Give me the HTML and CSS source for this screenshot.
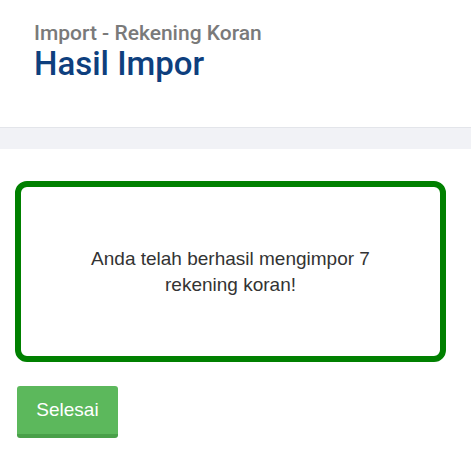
FILE: index.html
```html
<!DOCTYPE html>
<html lang="id">
<head>
<meta charset="utf-8">
<title>Hasil Impor</title>
<link rel="stylesheet" href="styles.css">
</head>
<body>
<header class="page-header">
  <div class="subtitle">Import - Rekening Koran</div>
  <h1 class="title">Hasil Impor</h1>
</header>
<div class="band"></div>
<main class="content">
  <div class="result-box">
    <p class="result-text">Anda telah berhasil mengimpor 7 rekening koran!</p>
  </div>
  <button class="btn-done" type="button">Selesai</button>
</main>
</body>
</html>
```
FILE: styles.css
```css
html, body {
  margin: 0;
  padding: 0;
  background: #ffffff;
}
body {
  font-family: "Liberation Sans", Arial, sans-serif;
}
.page-header {
  height: 127px;
  box-sizing: border-box;
  padding: 21px 0 0 34px;
}
.subtitle {
  font-family: Roboto, "Liberation Sans", sans-serif;
  font-size: 21px;
  line-height: 24px;
  color: #7a7a7a;
  font-weight: 500;
}
.title {
  margin: 0;
  font-family: Roboto, "Liberation Sans", sans-serif;
  font-size: 33px;
  line-height: 38px;
  font-weight: 500;
  color: #0e3f7e;
}
.band {
  height: 21px;
  background: #f1f2f6;
  border-top: 1px solid #e3e5ea;
}
.content {
  padding: 32px 25px 0 15px;
}
.result-box {
  height: 181px;
  box-sizing: border-box;
  border: 6px solid #008000;
  border-radius: 12px;
  display: flex;
  align-items: center;
  justify-content: center;
}
.result-text {
  margin: 0;
  max-width: 310px;
  text-align: center;
  font-size: 19px;
  line-height: 26px;
  color: #333333;
}
.btn-done {
  margin: 24px 0 0 2px;
  width: 101px;
  height: 52px;
  box-sizing: border-box;
  border: none;
  border-bottom: 4px solid #49a049;
  border-radius: 3px;
  background: #5cb85c;
  color: #ffffff;
  font-family: "Liberation Sans", Arial, sans-serif;
  font-size: 19px;
  padding: 0;
  display: block;
}
```
